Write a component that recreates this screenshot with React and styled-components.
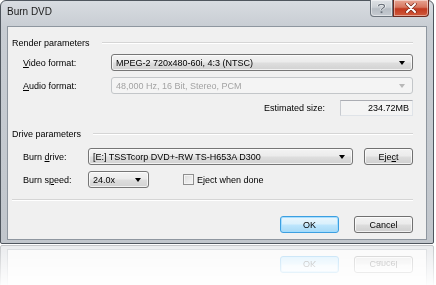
import React from "react";
import styled, { createGlobalStyle } from "styled-components";

const GlobalStyle = createGlobalStyle`
  html, body {
    margin: 0;
    padding: 0;
    background: #ffffff;
  }

  body {
    width: 436px;
    height: 285px;
    overflow: hidden;
    font-family: "Liberation Sans", Arial, sans-serif;
    font-size: 9px;
    color: #000000;
  }
`;

const Stage = styled.div`
  width: 436px;
  height: 285px;
  overflow: hidden;
  background: #ffffff;
`;

const Window = styled.div`
  width: 434px;
  height: 244px;
  box-sizing: border-box;
  display: flex;
  flex-direction: column;
  padding: 0 6px 6px;
  border: 1px solid #4f565e;
  border-radius: 6px 6px 2px 2px;
  background: linear-gradient(#d8dce1, #c8cdd3 26px, #c1c6cc);
  -webkit-box-reflect: below 1px
    linear-gradient(to bottom, transparent 82%, rgba(0, 0, 0, 0.34));
`;

const TitleBar = styled.div`
  display: flex;
  flex-flow: row nowrap;
  align-items: flex-start;
  justify-content: space-between;
  height: 25px;
  flex-shrink: 0;
`;

const Title = styled.span`
  margin-top: 5px;
  font-size: 10px;
  color: #1a1a1a;
`;

const CaptionButtons = styled.div`
  display: flex;
  margin-top: -1px;
  margin-right: -2px;
`;

const CaptionButton = styled.div`
  display: flex;
  align-items: center;
  justify-content: center;
  width: ${({ wide }) => (wide ? "36px" : "23px")};
  height: 17px;
  box-sizing: border-box;
  border: 1px solid ${({ danger }) => (danger ? "#6d2a20" : "#6c747d")};
  border-top: none;
  border-radius: ${({ danger }) => (danger ? "0 0 4px 0" : "0 0 0 4px")};
  background: ${({ danger }) =>
    danger
      ? "linear-gradient(#e8a593, #d7765f 45%, #c2391f 55%, #d05a3c)"
      : "linear-gradient(#dfe2e6, #ccd1d6 45%, #b7bdc4 55%, #c6cbd1)"};
  box-shadow: inset 0 0 0 1px rgba(255, 255, 255, 0.45);
`;

const Client = styled.div`
  flex: 1;
  display: flex;
  flex-direction: column;
  box-sizing: border-box;
  padding: 9px 13px 6px 4px;
  border: 1px solid #8e969f;
  background: #f0f0f0;
`;

const GroupHeading = styled.div`
  display: flex;
  align-items: center;
  height: 13px;
  margin-top: ${({ top }) => top || 0}px;
  white-space: nowrap;

  &::after {
    content: "";
    flex: 1;
    margin-left: 12px;
    border-top: 1px solid #d5d5d5;
    border-bottom: 1px solid #ffffff;
  }
`;

const FieldGrid = styled.div`
  display: grid;
  grid-template-columns: ${({ labelWidth }) => labelWidth}px 1fr;
  row-gap: ${({ rowGap }) => rowGap}px;
  align-items: center;
  margin-top: ${({ top }) => top}px;
  padding-left: 11px;
`;

const Label = styled.span`
  white-space: nowrap;
`;

const Key = styled.span`
  text-decoration: underline;
`;

const Combo = styled.div`
  position: relative;
  display: flex;
  align-items: center;
  width: ${({ width }) => (width ? `${width}px` : "auto")};
  height: 17px;
  box-sizing: border-box;
  padding-left: 4px;
  border: 1px solid ${({ disabled }) => (disabled ? "#c3c6c9" : "#767676")};
  border-radius: 3px;
  color: ${({ disabled }) => (disabled ? "#a3a3a3" : "#000000")};
  background: ${({ disabled }) =>
    disabled
      ? "#f4f4f4"
      : "linear-gradient(#f3f3f3, #ebebeb 48%, #dedede 52%, #d2d2d2)"};
  box-shadow: ${({ disabled }) =>
    disabled ? "none" : "inset 0 0 0 1px rgba(255, 255, 255, 0.7)"};
  white-space: nowrap;

  &::after {
    content: "";
    position: absolute;
    right: 7px;
    top: 6px;
    border-left: 3.5px solid transparent;
    border-right: 3.5px solid transparent;
    border-top: 4px solid ${({ disabled }) => (disabled ? "#b8b8b8" : "#000000")};
  }
`;

const Row = styled.div`
  display: flex;
  align-items: center;
  justify-content: ${({ end }) => (end ? "flex-end" : "flex-start")};
  gap: ${({ gap }) => gap || 0}px;
`;

const SizeRow = styled(Row)`
  grid-column: 1 / -1;
`;

const ReadOnlyBox = styled.div`
  width: 73px;
  height: 16px;
  box-sizing: border-box;
  padding: 1px 3px 0 0;
  text-align: right;
  line-height: 13px;
  background: #f4f4f4;
  border: 1px solid #dfe3e8;
  border-top-color: #abadb3;
  border-left-color: #c7cacf;
`;

const Button = styled.div`
  display: flex;
  align-items: center;
  justify-content: center;
  width: ${({ width }) => width}px;
  height: 17px;
  box-sizing: border-box;
  border: 1px solid ${({ primary }) => (primary ? "#3c9fe0" : "#707070")};
  border-radius: 3px;
  background: ${({ primary }) =>
    primary
      ? "linear-gradient(#eaf6fd, #d9f0fc 48%, #bee6fd 52%, #a7d9f5)"
      : "linear-gradient(#f2f2f2, #ebebeb 48%, #dddddd 52%, #cfcfcf)"};
  box-shadow: inset 0 0 0 1px
    ${({ primary }) => (primary ? "rgba(160, 220, 255, 0.9)" : "rgba(255, 255, 255, 0.7)")};
`;

const CheckLabel = styled.label`
  display: flex;
  align-items: center;
  gap: 3px;
  margin-left: 34px;
`;

const CheckBox = styled.span`
  width: 11px;
  height: 11px;
  box-sizing: border-box;
  border: 1px solid #8f8f8f;
  background: linear-gradient(135deg, #dcdcdc, #f6f6f6);
  box-shadow: inset 0 0 0 1px #f4f4f4;
`;

const Separator = styled.div`
  margin-top: 11px;
  border-top: 1px solid #d5d5d5;
  border-bottom: 1px solid #ffffff;
`;

const Footer = styled(Row)`
  margin-top: 15px;
`;

function HelpGlyph() {
  return (
    <svg width="9" height="11" viewBox="0 0 9 11">
      <path
        d="M1.5 3.2 C1.5 0.8 7.5 0.8 7.5 3.2 C7.5 5 4.5 5 4.5 7"
        fill="none"
        stroke="#ffffff"
        strokeWidth="2.4"
      />
      <path
        d="M1.5 3.2 C1.5 0.8 7.5 0.8 7.5 3.2 C7.5 5 4.5 5 4.5 7"
        fill="none"
        stroke="#6a727c"
        strokeWidth="1.2"
      />
      <rect x="3.6" y="8.3" width="1.8" height="1.8" fill="#6a727c" />
    </svg>
  );
}

function CloseGlyph() {
  return (
    <svg width="12" height="10" viewBox="0 0 12 10">
      <path d="M2 1 L10 9 M10 1 L2 9" stroke="#7a2b1c" strokeWidth="3.4" strokeLinecap="round" />
      <path d="M2 1 L10 9 M10 1 L2 9" stroke="#ffffff" strokeWidth="2" strokeLinecap="round" />
    </svg>
  );
}

export default function App() {
  return (
    <Stage>
      <GlobalStyle />
      <Window>
        <TitleBar>
          <Title>Burn DVD</Title>
          <CaptionButtons>
            <CaptionButton>
              <HelpGlyph />
            </CaptionButton>
            <CaptionButton wide danger>
              <CloseGlyph />
            </CaptionButton>
          </CaptionButtons>
        </TitleBar>

        <Client>
          <GroupHeading>Render parameters</GroupHeading>
          <FieldGrid labelWidth={88} rowGap={6} top={5}>
            <Label>
              <Key>V</Key>ideo format:
            </Label>
            <Combo>MPEG-2 720x480-60i, 4:3 (NTSC)</Combo>
            <Label>
              <Key>A</Key>udio format:
            </Label>
            <Combo disabled>48,000 Hz, 16 Bit, Stereo, PCM</Combo>
            <SizeRow end gap={15}>
              <Label>Estimated size:</Label>
              <ReadOnlyBox>234.72MB</ReadOnlyBox>
            </SizeRow>
          </FieldGrid>

          <GroupHeading top={11}>Drive parameters</GroupHeading>
          <FieldGrid labelWidth={65} rowGap={6} top={8}>
            <Label>
              Burn <Key>d</Key>rive:
            </Label>
            <Row gap={11}>
              <Combo width={265}>[E:] TSSTcorp DVD+-RW TS-H653A D300</Combo>
              <Button width={49}>
                <span>
                  Eje<Key>c</Key>t
                </span>
              </Button>
            </Row>
            <Label>
              Burn s<Key>p</Key>eed:
            </Label>
            <Row>
              <Combo width={61}>24.0x</Combo>
              <CheckLabel>
                <CheckBox />
                Eject when done
              </CheckLabel>
            </Row>
          </FieldGrid>

          <Separator />

          <Footer end gap={15}>
            <Button width={59} primary>
              OK
            </Button>
            <Button width={59}>Cancel</Button>
          </Footer>
        </Client>
      </Window>
    </Stage>
  );
}
